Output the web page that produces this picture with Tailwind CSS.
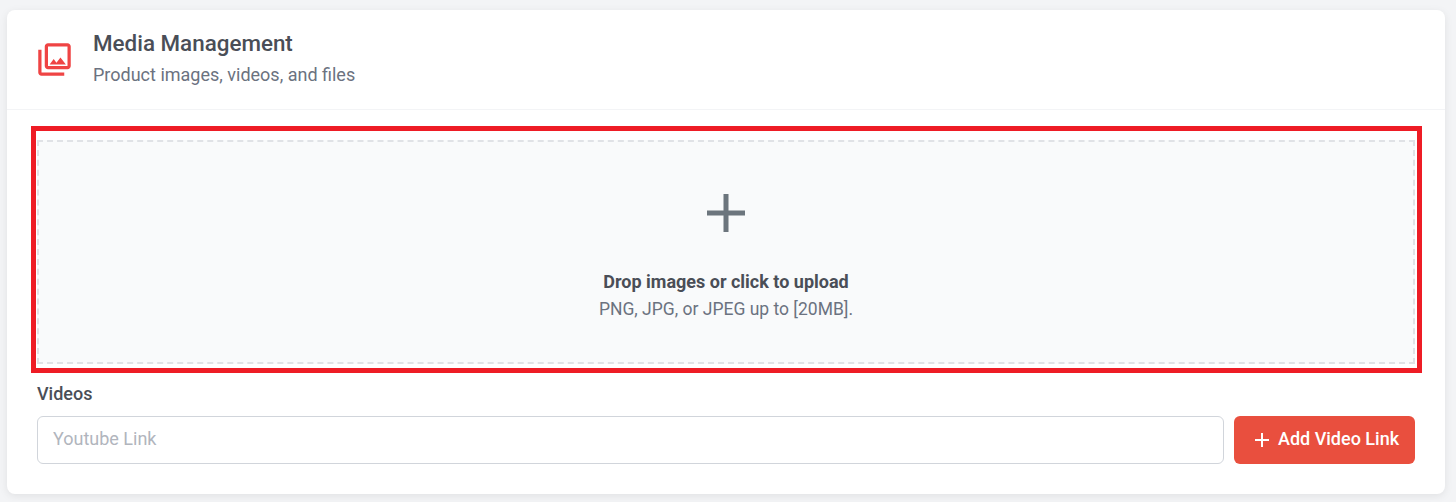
<!doctype html>
<html lang="en">
    <head>
        <meta charset="UTF-8" />
        <meta name="viewport" content="width=device-width, initial-scale=1.0" />
        <title>Media Management</title>
        <script src="https://cdn.jsdelivr.net/npm/@tailwindcss/browser@4"></script>
    </head>
    <body class="h-[502px] overflow-hidden bg-[#f3f4f6] pt-[10px] pl-[7px] pr-[11px] font-['Roboto',sans-serif]">
        <div class="h-[484px] rounded-lg bg-white shadow-[0_2px_8px_rgba(0,0,0,0.08)]">
            <!-- Header -->
            <div class="flex h-[100px] items-center gap-[19px] border-b border-[#f3f4f6] pl-[28px]">
                <svg class="h-[39px] w-[39px] text-[#ef4444]" viewBox="0 0 24 24" fill="currentColor">
                    <path d="M20 4v12H8V4h12m0-2H8c-1.1 0-2 .9-2 2v12c0 1.1.9 2 2 2h12c1.1 0 2-.9 2-2V4c0-1.1-.9-2-2-2zm-8.5 9.67l1.69 2.26 2.48-3.1L19 15H9zM2 6v14c0 1.1.9 2 2 2h14v-2H4V6H2z" />
                </svg>
                <div>
                    <h2 class="-translate-y-px text-[22.4px] leading-[28px] font-medium text-[#4a4e57]">Media Management</h2>
                    <p class="mt-[3px] text-[18px] leading-[28px] text-[#6b7280]">Product images, videos, and files</p>
                </div>
            </div>

            <!-- Drop zone -->
            <div class="ml-[24px] mr-[23px] mt-[16px] border-[5px] border-[#ee1c25] pl-px pr-[2px] pt-[9px] pb-[4px]">
                <div class="flex h-[224px] flex-col items-center border-2 border-dashed border-[#e0e2e6] bg-[#f9fafb]">
                    <svg class="mt-[52px] h-[38px] w-[38px] text-[#6c757d]" viewBox="0 0 38 38" fill="currentColor">
                        <path d="M16.5 0h5v16.5H38v5H21.5V38h-5V21.5H0v-5h16.5z" />
                    </svg>
                    <p class="mt-[36px] text-[18px] leading-[28px] font-bold text-[#4a4e57]">Drop images or click to upload</p>
                    <p class="text-[17.5px] leading-[26px] text-[#6b7280]">PNG, JPG, or JPEG up to [20MB].</p>
                </div>
            </div>

            <!-- Videos -->
            <div class="mx-[30px] mt-[9px]">
                <label class="block text-[18px] leading-[24px] font-medium text-[#4a4e57]">Videos</label>
                <div class="mt-[10px] flex gap-[10px]">
                    <input
                        type="text"
                        placeholder="Youtube Link"
                        class="h-[48px] flex-1 rounded-md border border-[#d1d5db] px-[15px] pb-[4px] text-[18px] placeholder:text-[#b1b5bd]"
                    />
                    <button type="button" class="flex h-[48px] w-[181px] items-center justify-center gap-[8px] rounded-md bg-[#e94f3e] pl-[4px] pb-[4px] text-[18px] font-medium text-white">
                        <svg class="mt-[4px] h-4 w-4" viewBox="0 0 16 16" fill="currentColor"><path d="M7 1h2v6h6v2H9v6H7V9H1V7h6z" /></svg>
                        Add Video Link
                    </button>
                </div>
            </div>
        </div>
    </body>
</html>
